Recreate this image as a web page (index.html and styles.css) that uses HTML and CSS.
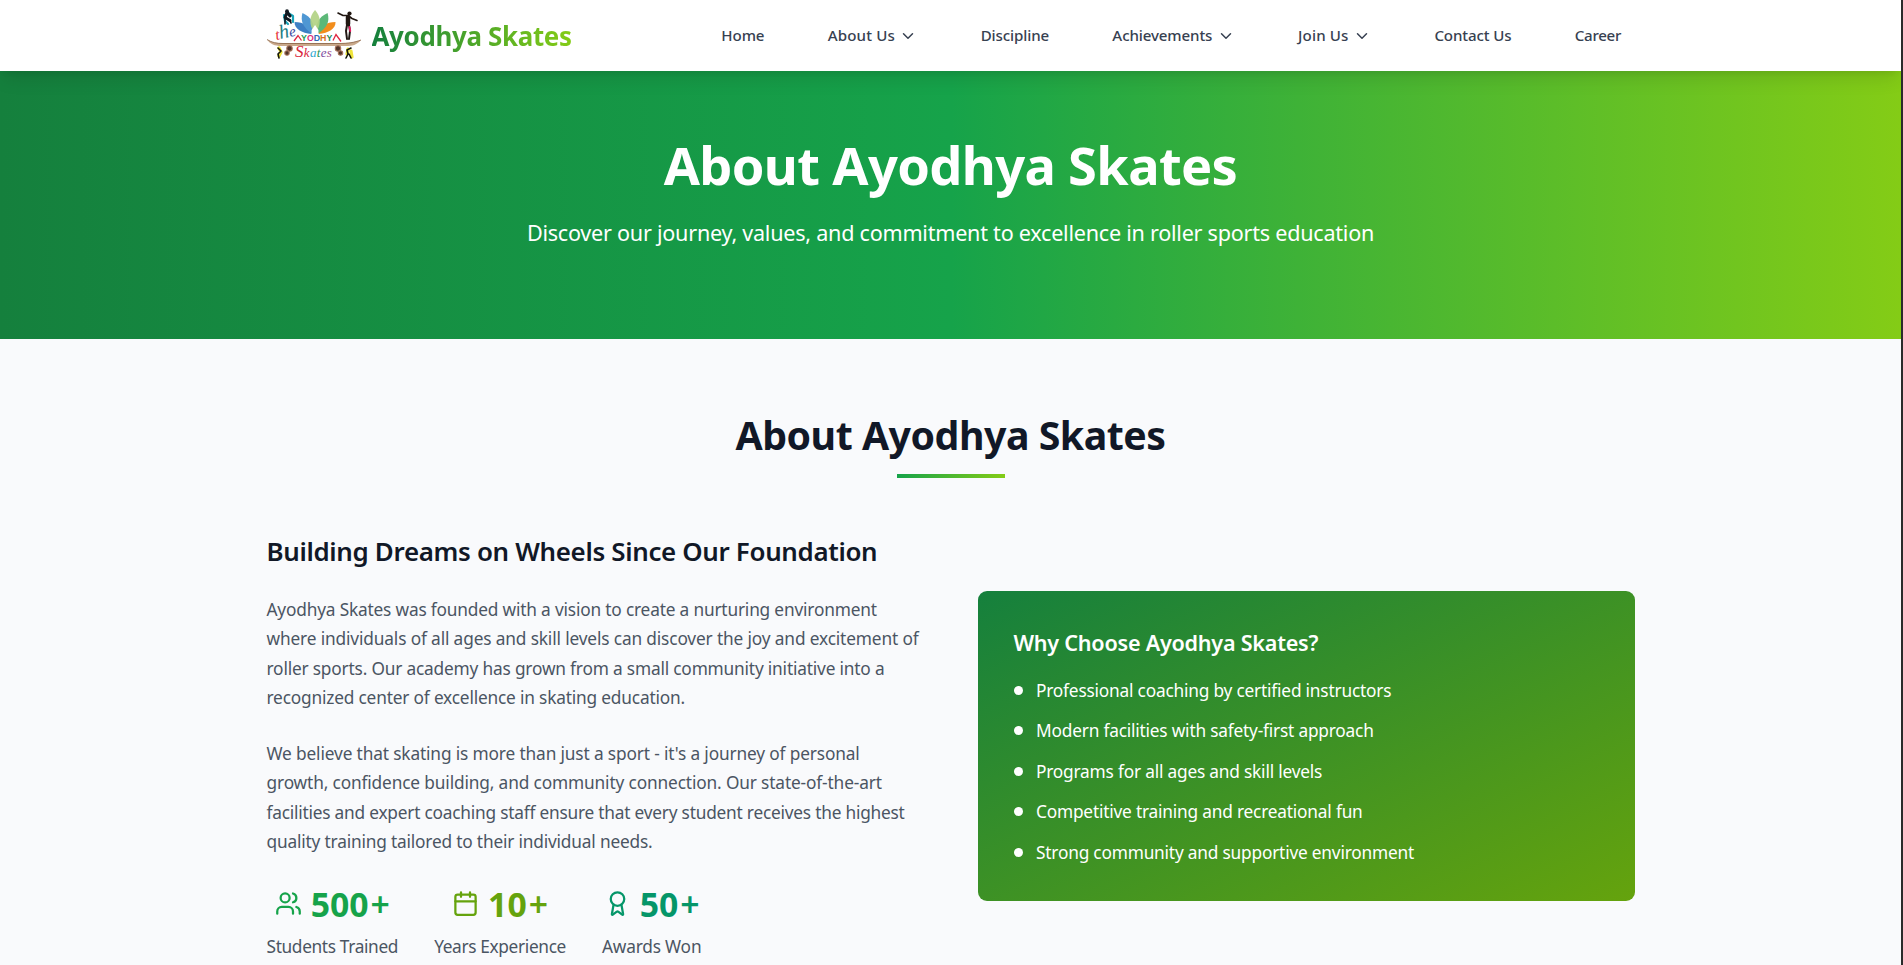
FILE: index.html
```html
<!DOCTYPE html>
<html lang="en">
<head>
<meta charset="utf-8">
<title>About Ayodhya Skates</title>
<link rel="stylesheet" href="styles.css">
</head>
<body>
<div class="page">
<header class="navbar">
  <div class="container navbar-inner">
    <a class="brand">
      <svg class="logo" viewBox="0 0 94 52" width="94" height="52">
        <g transform="translate(1.300 0) scale(1.140 1)">
          <path d="M38 25C29 24 23 20 23 13c8 0 14 4 15 12z" fill="#3d7fc4"/>
          <path d="M44 25c1-8 7-12 15-12 0 7-6 11-15 12z" fill="#f28d1c"/>
          <path d="M39 25C30 19 28 11 30 4c8 4 11 11 9 21z" fill="#4f97d3"/>
          <path d="M43 25c-2-10 1-17 9-21 2 8 0 15-9 21z" fill="#5cb878"/>
          <path d="M41 24c-6-8-5-17 0-23 5 6 6 15 0 23z" fill="#b2d284" fill-opacity=".92"/>
          <path d="M41 16l3 5v6h-6v-6z" fill="#fff"/>
        </g>
        <g fill="none" stroke-linecap="round" stroke-linejoin="round">
          <path d="M21 4l5 3v6M17 6l1 6 3 3" stroke="#16a3b8" stroke-width="2.200"/>
          <path d="M20 3.500l-2 5 5 3M20 3l3 4" stroke="#111820" stroke-width="3"/>
          <path d="M18 10v5M23 11l1 3" stroke="#111820" stroke-width="1.600"/>
        </g>
        <circle cx="20" cy="2.200" r="1.900" fill="#111820"/>
        <g transform="translate(6 0)" fill="none" stroke-linecap="round" stroke-linejoin="round">
          <path d="M65 4l5 2.500h5l4 3 5 2" stroke="#211712" stroke-width="1.600"/>
          <path d="M75 8v7" stroke="#211712" stroke-width="4.500"/>
          <path d="M74 16l-1 6 1 8M76 16l1 6-1 8" stroke="#211712" stroke-width="2"/>
          <path d="M76.500 18l.8 4" stroke="#e91e63" stroke-width="1.800"/>
          <circle cx="76.500" cy="4.500" r="2.100" fill="#211712"/>
        </g>
        <text class="logo-the" transform="rotate(-12 9 30)" x="9" y="31"><tspan fill="#e5252d">t</tspan><tspan class="logo-h" fill="#1b7d83">h</tspan><tspan fill="#3b4ba2">e</tspan></text>
        <path d="M0 30.500c5 3 9 3.500 16 3.500h55c11 0 16-.5 23-3-4 5-9 6-15 6H14C8 37 3 35 0 30.500z" fill="#c9a98b"/>
        <path d="M0 30.500c5 3 9 4 16 4h55c11 0 16-1 23-3.500" fill="none" stroke="#8a6448" stroke-width=".8"/>
        <path d="M27 32l4-5.500 3.500 5M66 31.500l3-6 5 7" fill="none" stroke="#df2540" stroke-width="1.300"/>
        <text class="logo-name" x="34" y="31.500"><tspan fill="#1b9a55">Y</tspan><tspan fill="#dc2a79">O</tspan><tspan fill="#2d68b5">D</tspan><tspan fill="#d9701c">H</tspan><tspan fill="#1b8b58">Y</tspan></text>
        <g fill="#51352a" stroke="#a5705a" stroke-width="1.100">
          <circle cx="22.500" cy="39.500" r="2.700"/><circle cx="20" cy="44" r="2.200"/>
          <circle cx="71" cy="39.500" r="2.700"/><circle cx="73.500" cy="44" r="2.200"/>
        </g>
        <g fill="none" stroke-linecap="round" stroke-linejoin="round">
          <path d="M12 39l2 4-2 4M81 40l-1 5M84 42l1 6" stroke="#efe43a" stroke-width="3.200"/>
          <path d="M11 39l3 3-3 3 1 4M84 39l-4 2 1 4-2 4M82 45l2 4" stroke="#17180d" stroke-width="1.600"/>
        </g>
        <text class="logo-skates" x="28" y="48"><tspan class="logo-s" fill="#d9243c">S</tspan><tspan fill="#d9243c">k</tspan><tspan fill="#2fa7cf">a</tspan><tspan fill="#27945b">t</tspan><tspan fill="#7a4a9e">e</tspan><tspan fill="#9a4a8e">s</tspan></text>
      </svg>
      <span class="brand-name">Ayodhya Skates</span>
    </a>
    <nav class="menu">
      <a class="menu-item">Home</a>
      <a class="menu-item loose">About Us<svg class="chevron" viewBox="0 0 24 24"><path d="m6 9 6 6 6-6"/></svg></a>
      <a class="menu-item">Discipline</a>
      <a class="menu-item">Achievements<svg class="chevron" viewBox="0 0 24 24"><path d="m6 9 6 6 6-6"/></svg></a>
      <a class="menu-item loose">Join Us<svg class="chevron" viewBox="0 0 24 24"><path d="m6 9 6 6 6-6"/></svg></a>
      <a class="menu-item">Contact Us</a>
      <a class="menu-item tight">Career</a>
    </nav>
  </div>
</header>
<section class="hero">
  <h1>About Ayodhya Skates</h1>
  <p>Discover our journey, values, and commitment to excellence in roller sports education</p>
</section>
<main class="container about">
  <div class="section-head">
    <h2>About Ayodhya Skates</h2>
    <div class="rule"></div>
  </div>
  <div class="columns">
    <div class="story">
      <h3>Building Dreams on Wheels Since Our Foundation</h3>
      <p>Ayodhya Skates was founded with a vision to create a nurturing environment<br><span class="wide">where individuals of all ages and skill levels can discover the joy and excitement of</span><br>roller sports. Our academy has grown from a small community initiative into a<br>recognized center of excellence in skating education.</p>
      <p><span class="wide">We believe that skating is more than just a sport - it's a journey of personal</span><br><span class="wide">growth, confidence building, and community connection. Our state-of-the-art</span><br><span class="narrow">facilities and expert coaching staff ensure that every student receives the highest</span><br>quality training tailored to their individual needs.</p>
      <div class="stats">
        <div class="stat green">
          <div class="figure"><svg class="icon" viewBox="0 0 24 24"><path d="M16 21v-2a4 4 0 0 0-4-4H6a4 4 0 0 0-4 4v2"/><circle cx="9" cy="7" r="4"/><path d="M22 21v-2a4 4 0 0 0-3-3.870"/><path d="M16 3.130a4 4 0 0 1 0 7.750"/></svg><span>500<span class="plus">+</span></span></div>
          <div class="label">Students Trained</div>
        </div>
        <div class="stat lime">
          <div class="figure"><svg class="icon" viewBox="0 0 24 24"><path d="M8 2v4M16 2v4"/><rect x="3" y="4" width="18" height="18" rx="2"/><path d="M3 10h18"/></svg><span>10<span class="plus">+</span></span></div>
          <div class="label">Years Experience</div>
        </div>
        <div class="stat teal">
          <div class="figure"><svg class="icon" viewBox="0 0 24 24"><path d="m15.477 12.890 1.515 8.526a.5.5 0 0 1-.81.470l-3.580-2.687a1 1 0 0 0-1.197 0l-3.586 2.686a.5.5 0 0 1-.81-.469l1.514-8.526"/><circle cx="12" cy="8" r="6"/></svg><span>50<span class="plus">+</span></span></div>
          <div class="label awards">Awards Won</div>
        </div>
      </div>
    </div>
    <aside class="card">
      <h4>Why Choose Ayodhya Skates?</h4>
      <ul>
        <li>Professional coaching by certified instructors</li>
        <li>Modern facilities with safety-first approach</li>
        <li>Programs for all ages and skill levels</li>
        <li>Competitive training and recreational fun</li>
        <li>Strong community and supportive environment</li>
      </ul>
    </aside>
  </div>
</main>
</div>
</body>
</html>
```
FILE: styles.css
```css
* { box-sizing: border-box; margin: 0; padding: 0; }
body {
  height: 965px;
  overflow: hidden;
  background: #2b2b2b;
  font-family: "Noto Sans", "Open Sans", sans-serif;
  font-size: 17.300px;
  color: #4b5563;
}
.page { width: 1901px; height: 965px; overflow: hidden; background: #f9fafc; }
.container { width: 1440px; margin: 0 auto; padding: 0 36px; }

.navbar {
  position: relative;
  height: 71px;
  background: #fff;
  box-shadow: 0 11px 17px -3px rgba(0,0,0,.1), 0 4px 7px -4px rgba(0,0,0,.1);
}
.navbar-inner { display: flex; justify-content: space-between; height: 71px; }
.brand { display: flex; align-items: flex-start; gap: 11px; padding-top: 9px; }
.logo { display: block; overflow: visible; }
.logo-the { font: italic 15px "Liberation Serif", serif; }
.logo-h { font-size: 20px; }
.logo-name { font: bold 8.800px "Liberation Sans", sans-serif; }
.logo-skates { font: italic 13px "Liberation Serif", serif; letter-spacing: .3px; }
.logo-s { font-size: 17px; }
.brand-name {
  margin-top: 9px;
  font-size: 25.900px;
  line-height: 36px;
  font-weight: 700;
  letter-spacing: -.32px;
  background: linear-gradient(to right, #15803d, #84cc16);
  -webkit-background-clip: text;
  background-clip: text;
  color: transparent;
}
.menu { display: flex; gap: 63.300px; padding: 24px 13.500px 0 0; }
.menu-item {
  display: flex;
  align-items: center;
  gap: 4.500px;
  height: 23px;
  font-size: 15.100px;
  font-weight: 500;
  line-height: 23px;
  letter-spacing: -.12px;
  color: #374151;
  white-space: nowrap;
}
.menu-item.loose { letter-spacing: .14px; }
.menu-item.tight { letter-spacing: -.3px; }
.chevron { width: 18px; height: 18px; fill: none; stroke: currentColor; stroke-width: 2; stroke-linecap: round; stroke-linejoin: round; }

.hero {
  height: 268px;
  padding-top: 67px;
  text-align: center;
  color: #fff;
  background: linear-gradient(to right, #15803d, #16a34a, #84cc16);
}
.hero h1 { font-size: 52.400px; line-height: 54px; letter-spacing: -.65px; }
.hero p { margin-top: 25px; font-size: 21.600px; line-height: 31.500px; letter-spacing: -.25px; }

.section-head { padding-top: 74px; text-align: center; }
.section-head h2 { font-size: 39.300px; line-height: 45px; letter-spacing: -.5px; color: #111827; }
.rule { width: 108px; height: 4px; margin: 16px auto 0; background: linear-gradient(to right, #16a34a, #84cc16); }

.columns { display: grid; grid-template-columns: 1fr 1fr; gap: 54px; align-items: center; margin-top: 55px; }
.story h3 { font-size: 25.900px; line-height: 36px; font-weight: 600; letter-spacing: -.32px; color: #111827; }
.story p { margin-top: 27px; line-height: 29.250px; letter-spacing: -.185px; white-space: nowrap; }
.story h3 + p { margin-top: 26px; }
.wide { letter-spacing: -.145px; }
.narrow { letter-spacing: -.22px; }
.stats { display: flex; gap: 36px; margin-top: 28px; }
.stat { text-align: center; }
.figure { display: flex; justify-content: center; align-items: center; gap: 9px; height: 40.500px; font-size: 33.750px; font-weight: 700; line-height: 40.500px; }
.plus { margin-left: 2px; font-weight: 600; }
.icon { width: 27px; height: 27px; margin-top: -2px; fill: none; stroke: currentColor; stroke-width: 2; stroke-linecap: round; stroke-linejoin: round; }
.green .figure { color: #16a34a; }
.lime .figure { color: #65a30d; }
.teal .figure { color: #059669; }
.label { margin-top: 8px; line-height: 27px; letter-spacing: -.35px; white-space: nowrap; }
.label.awards { letter-spacing: -.2px; }

.card { height: 310px; padding: 36px; border-radius: 9px; color: #fff; background: linear-gradient(to bottom right, #15803d, #65a30d); }
.card h4 { font-size: 21.600px; line-height: 31.500px; font-weight: 600; letter-spacing: -.25px; }
.card ul { display: flex; flex-direction: column; gap: 13.500px; margin-top: 18px; list-style: none; }
.card li { display: flex; align-items: center; gap: 13.500px; line-height: 27px; letter-spacing: -.2px; }
.card li::before { content: ""; width: 9px; height: 9px; border-radius: 50%; background: #fff; }
```
